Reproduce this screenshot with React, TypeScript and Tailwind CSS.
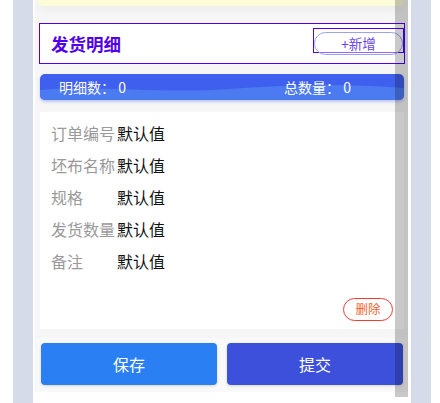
import React from "react";

const rows = [
  { label: "订单编号", value: "默认值" },
  { label: "坯布名称", value: "默认值" },
  { label: "规格", value: "默认值" },
  { label: "发货数量", value: "默认值" },
  { label: "备注", value: "默认值" },
];

const font = { fontFamily: '"Noto Sans CJK SC", "Noto Sans", sans-serif' };

export default function App() {
  return (
    <div className="relative w-[440px] h-[403px] bg-white overflow-hidden" style={font}>
      <div className="flex h-full">
        <div className="w-[13px] shrink-0" />
        <div className="w-[20px] shrink-0 bg-[#d5dbe8]" />

        {/* Page */}
        <div className="w-[378px] shrink-0 pl-[2px] pr-[3px] bg-white">
          <div className="h-[392px] bg-[#f6f6f6] flex flex-col">
            {/* Previous card tail */}
            <div className="ml-[2px] mr-[3px] h-[6px] rounded-b-[6px] bg-[#fcfdd8] shadow-[0_3px_8px_rgba(0,0,0,0.06)]" />

            {/* Section header */}
            <div className="mt-[17px] ml-[4px] mr-[3px] h-[41px] border border-[#4b00ff] bg-white flex items-start justify-between">
              <h2 className="pl-[11px] h-full flex items-center text-[17.5px] font-bold text-[#5200ea] leading-none">
                发货明细
              </h2>
              <div className="relative mt-[4px] w-[91px] h-[25px] border border-[#4b00ff]">
                <button className="absolute left-0 top-[3px] w-[89px] h-[23px] rounded-full border border-[#97a4ea] bg-white/40 text-[13.5px] leading-none text-[#6a45ea] flex items-center justify-center">
                  +新增
                </button>
              </div>
            </div>

            {/* Summary bar */}
            <div className="relative mt-[10px] ml-[5px] mr-[4px] h-[26px] rounded-[5px] overflow-hidden bg-[#3f60ee] shadow-[0_2px_3px_rgba(80,110,240,0.35)]">
              <svg className="absolute inset-0 w-full h-full" viewBox="0 0 364 26" preserveAspectRatio="none">
                <path
                  d="M0 16 C 60 11, 120 20, 190 15 S 310 10, 364 14 L 364 26 L 0 26 Z"
                  fill="#4c7af0"
                />
              </svg>
              <div className="relative h-full flex items-center pl-[19px] text-[14px] text-white leading-none">
                <span className="w-[225px]">明细数：&nbsp;0</span>
                <span>总数量：&nbsp;0</span>
              </div>
            </div>

            {/* Detail card */}
            <div className="mt-[12px] ml-[5px] mr-[4px] h-[217px] bg-white pt-[5px] pl-[11px] pr-[11px] flex flex-col">
              {rows.map((r) => (
                <div key={r.label} className="h-[32px] flex items-center text-[16px] leading-none">
                  <span className="w-[66px] text-[#9a9a9a]">{r.label}</span>
                  <span className="text-[#111]">{r.value}</span>
                </div>
              ))}
              <div className="mt-[21px] flex justify-end">
                <button className="w-[50px] h-[23px] rounded-full border border-[#f43a2e] text-[12.5px] leading-none text-[#f2622a] flex items-center justify-center">
                  删除
                </button>
              </div>
            </div>

            {/* Bottom actions */}
            <div className="mt-[9px] ml-[2px] mr-[1px] h-[54px] bg-[#f9f9f9] px-[4px] pt-[5px] flex gap-[10px]">
              <button className="flex-1 h-[42px] rounded-[4px] bg-[#2a7ff2] text-white text-[16px] shadow-[0_1px_3px_rgba(0,0,0,0.15)]">
                保存
              </button>
              <button className="flex-1 h-[42px] rounded-[4px] bg-[#3c50dc] text-white text-[16px] shadow-[0_1px_3px_rgba(0,0,0,0.15)]">
                提交
              </button>
            </div>
          </div>
        </div>

        <div className="w-[20px] shrink-0 bg-[#d5dbe8]" />
        <div className="flex-1" />
      </div>

      {/* Scroll overlay */}
      <div className="absolute left-[395px] top-0 w-[13px] h-[397px] bg-black/[0.21]" />
    </div>
  );
}
